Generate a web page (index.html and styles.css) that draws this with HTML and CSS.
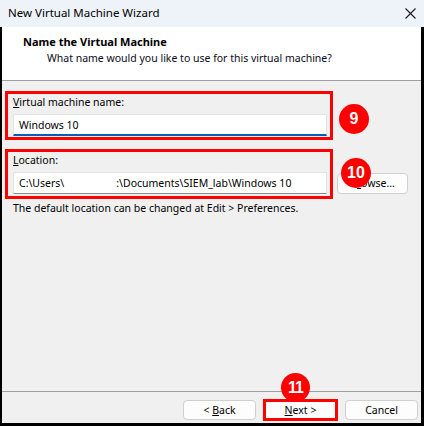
FILE: index.html
```html
<!DOCTYPE html>
<html>
<head>
<meta charset="utf-8">
<title>New Virtual Machine Wizard</title>
<link rel="stylesheet" href="styles.css">
</head>
<body>
<div class="window">
  <div class="titlebar">
    <span class="title">New Virtual Machine Wizard</span>
    <svg class="close" width="11" height="11" viewBox="0 0 11 11"><path d="M0.5 0.5 L10.5 10.5 M10.5 0.5 L0.5 10.5" stroke="#1a1a1a" stroke-width="1.1" fill="none"/></svg>
  </div>
  <div class="frame">
    <div class="header">
      <div class="h-title">Name the Virtual Machine</div>
      <div class="h-sub">What name would you like to use for this virtual machine?</div>
    </div>
    <div class="content">
      <div class="group">
        <div class="label"><u>V</u>irtual machine name:</div>
        <div class="input focused">Windows 10</div>
      </div>
      <div class="row">
        <div class="group group2">
          <div class="label"><u>L</u>ocation:</div>
          <div class="input">C:\Users\<span class="redact"></span>:\Documents\SIEM_lab\Windows 10</div>
        </div>
        <div class="btn browse">B<u>r</u>owse...</div>
      </div>
      <div class="hint">The default location can be changed at Edit &gt; Preferences.</div>
      <div class="badge b9">9</div>
      <div class="badge b10">10</div>
    </div>
    <div class="footer">
      <div class="btn">&lt; <u>B</u>ack</div>
      <div class="btn next"><u>N</u>ext &gt;</div>
      <div class="btn">Cancel</div>
      <div class="badge b11">11</div>
    </div>
  </div>
</div>
</body>
</html>
```
FILE: styles.css
```css
* { box-sizing: border-box; }
html, body { margin: 0; padding: 0; }
body {
  width: 424px;
  height: 426px;
  overflow: hidden;
  font-family: "Noto Sans", "Open Sans", sans-serif;
  font-size: 10.5px;
  color: #000;
  background: #000;
}
.window {
  width: 424px;
  height: 426px;
  display: flex;
  flex-direction: column;
}
.titlebar {
  height: 27px;
  background: #eef3f9;
  display: flex;
  align-items: center;
  justify-content: space-between;
  padding: 0 8px 1px 8px;
  font-size: 11.5px;
}
.title { line-height: 16px; }
.frame {
  flex: 1;
  display: flex;
  flex-direction: column;
  margin: 0 3px 3px 2px;
  background: #f0f0f0;
  position: relative;
}
.header {
  height: 54px;
  background: #fff;
  border-bottom: 1px solid #a0a0a0;
  padding: 7px 0 0 21px;
  line-height: 16px;
}
.h-title { font-weight: bold; font-size: 11px; }
.h-sub { margin-left: 24px; color: #0a0a20; }
.content {
  flex: 1;
  position: relative;
  padding: 10px 0 0 3px;
  line-height: 16px;
}
.group {
  width: 328px;
  border: 3px solid #ff0000;
  padding: 0 3px 1px 5px;
}
.label { height: 16px; }
.input {
  margin-top: 4px;
  height: 22px;
  background: #fff;
  border: 1px solid #e3e3e3;
  border-bottom-color: #8a8a8a;
  padding: 0 0 0 5px;
  line-height: 20px;
  white-space: nowrap;
  overflow: hidden;
}
.input.focused {
  border-bottom: 2px solid #005fb8;
}
.redact { display: inline-block; width: 52px; height: 10px; }
.row {
  display: flex;
  align-items: flex-end;
  margin-top: 9px;
}
.group2 { padding-bottom: 2px; }
.btn {
  width: 73px;
  height: 20px;
  background: #fdfdfd;
  border: 1px solid #d0d0d0;
  border-radius: 4px;
  text-align: center;
  line-height: 18px;
}
.browse {
  width: 71px;
  height: 21px;
  margin: 0 0 5px 4px;
}
.hint { margin: 1px 0 0 8px; }
.footer {
  height: 32px;
  border-top: 1px solid #a0a0a0;
  display: flex;
  justify-content: flex-end;
  align-items: flex-start;
  padding: 8px 3px 0 0;
  gap: 7px;
  position: relative;
}
.next {
  border: 3px solid #ff0000;
  border-radius: 0;
  height: 22px;
  width: 75px;
  margin-top: -1px;
  line-height: 16px;
}
.badge {
  position: absolute;
  width: 30px;
  height: 30px;
  border-radius: 50%;
  background: #ff0000;
  color: #fff;
  font-family: "Liberation Sans", Arial, sans-serif;
  font-size: 16px;
  font-weight: bold;
  line-height: 30px;
  text-align: center;
}
.b9 { left: 337px; top: 23px; }
.b10 { left: 339px; top: 77px; }
.b11 { left: 279px; top: -19px; width: 29px; height: 29px; line-height: 29px; letter-spacing: -1px; }
```
